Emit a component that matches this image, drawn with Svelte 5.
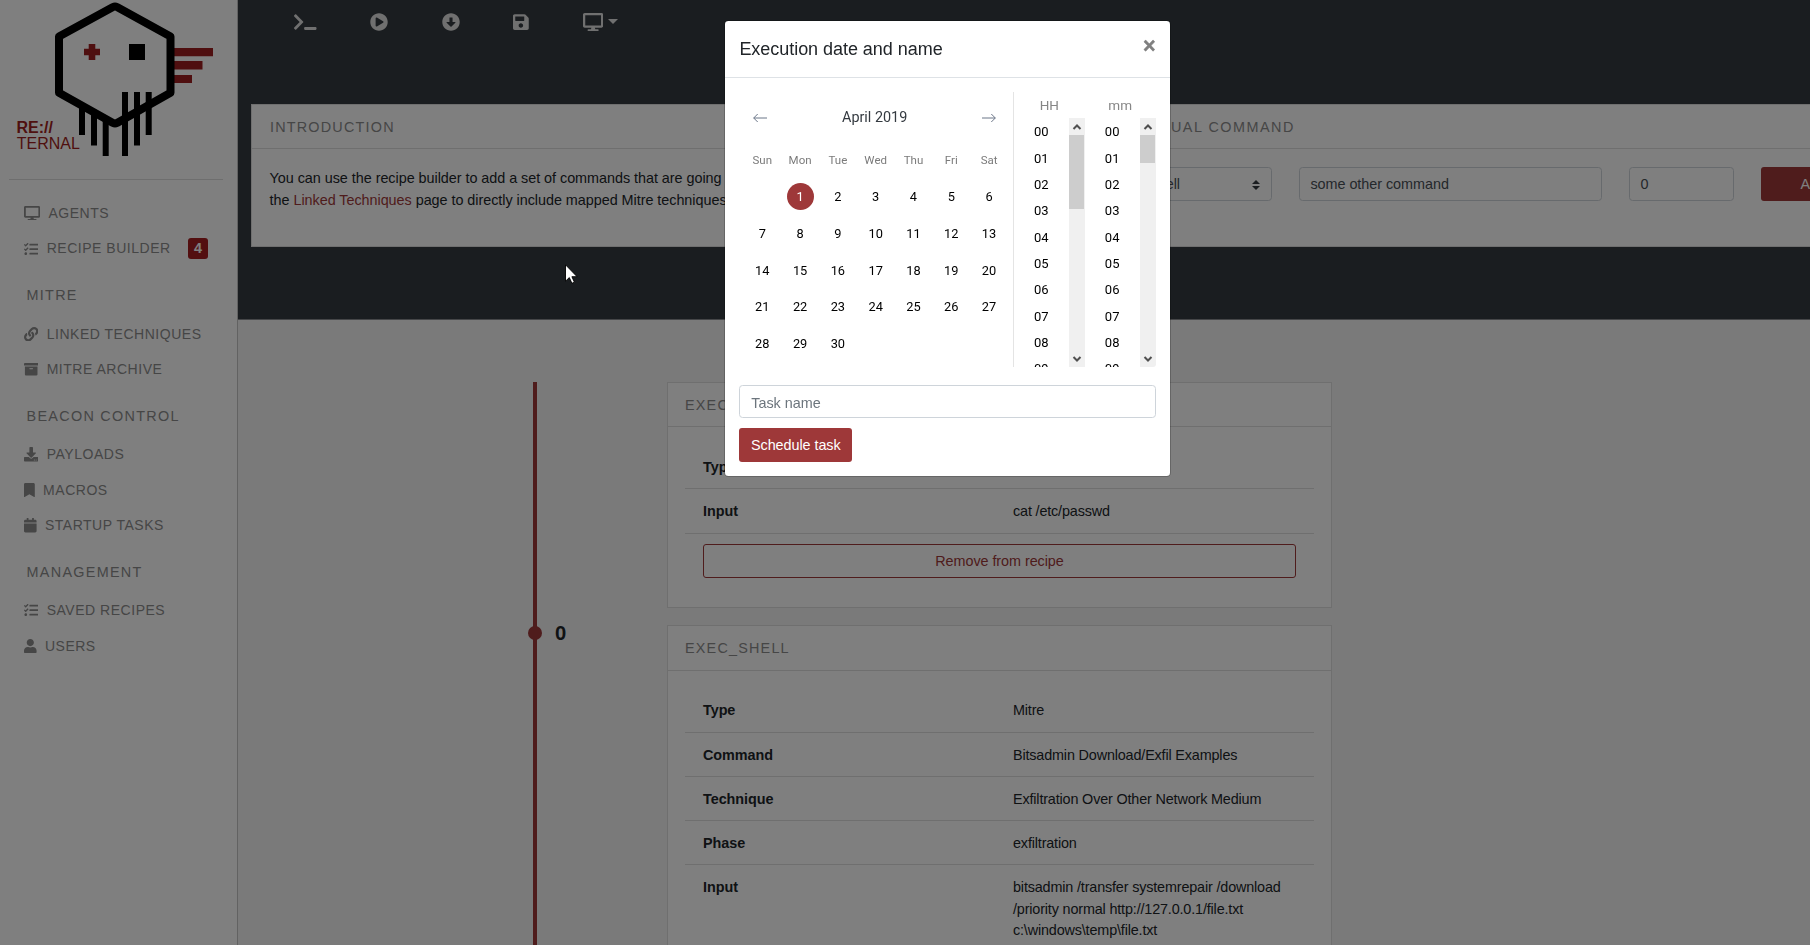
<script>
  const icons = {
    terminal: [640, 'M257.981 272.971L63.638 467.314c-9.373 9.373-24.569 9.373-33.941 0L7.029 444.647c-9.357-9.357-9.375-24.522-.04-33.901L161.011 256 6.99 101.255c-9.335-9.379-9.317-24.544.04-33.901l22.667-22.667c9.373-9.373 24.569-9.373 33.941 0L257.981 239.03c9.373 9.372 9.373 24.568 0 33.941zM640 456v-32c0-13.255-10.745-24-24-24H312c-13.255 0-24 10.745-24 24v32c0 13.255 10.745 24 24 24h304c13.255 0 24-10.745 24-24z'],
    play: [512, 'M256 8C119 8 8 119 8 256s111 248 248 248 248-111 248-248S393 8 256 8zm115.7 272l-176 101c-15.8 8.8-35.7-2.5-35.7-21V152c0-18.4 19.8-29.8 35.7-21l176 107c16.4 9.2 16.4 32.9 0 42z'],
    down: [512, 'M504 256c0 137-111 248-248 248S8 393 8 256 119 8 256 8s248 111 248 248zM212 140v116h-70.9c-10.7 0-16.1 13-8.5 20.5l114.9 114.3c4.7 4.7 12.2 4.7 16.9 0l114.9-114.3c7.6-7.6 2.2-20.5-8.5-20.5H300V140c0-6.6-5.4-12-12-12h-64c-6.6 0-12 5.4-12 12z'],
    save: [448, 'M433.941 129.941l-83.882-83.882A48 48 0 0 0 316.118 32H48C21.49 32 0 53.49 0 80v352c0 26.51 21.49 48 48 48h352c26.51 0 48-21.49 48-48V163.882a48 48 0 0 0-14.059-33.941zM224 416c-35.346 0-64-28.654-64-64 0-35.346 28.654-64 64-64s64 28.654 64 64c0 35.346-28.654 64-64 64zm96-304.52V212c0 6.627-5.373 12-12 12H76c-6.627 0-12-5.373-12-12V108c0-6.627 5.373-12 12-12h228.52c3.183 0 6.235 1.264 8.485 3.515l3.48 3.48A11.996 11.996 0 0 1 320 111.48z'],
    desktop: [576, 'M528 0H48C21.5 0 0 21.5 0 48v320c0 26.5 21.5 48 48 48h192l-16 48h-72c-13.3 0-24 10.7-24 24s10.7 24 24 24h272c13.3 0 24-10.7 24-24s-10.7-24-24-24h-72l-16-48h192c26.5 0 48-21.5 48-48V48c0-26.5-21.5-48-48-48zm-16 352H64V64h448v288z'],
    tasks: [512, 'M139.61 35.5a12 12 0 0 0-17 0L58.93 98.81l-22.7-22.12a12 12 0 0 0-17 0L3.53 92.41a12 12 0 0 0 0 17l47.59 47.4a12.78 12.78 0 0 0 17.61 0l15.59-15.62L156.52 69a12.09 12.09 0 0 0 .09-17zm0 159.19a12 12 0 0 0-17 0l-63.68 63.72-22.7-22.1a12 12 0 0 0-17 0L3.53 252a12 12 0 0 0 0 17L51 316.5a12.77 12.77 0 0 0 17.6 0l15.7-15.69 72.2-72.22a12 12 0 0 0 .09-16.9zM64 368c-26.49 0-48.59 21.5-48.59 48S37.53 464 64 464a48 48 0 0 0 0-96zm432 16H208a16 16 0 0 0-16 16v32a16 16 0 0 0 16 16h288a16 16 0 0 0 16-16v-32a16 16 0 0 0-16-16zm0-320H208a16 16 0 0 0-16 16v32a16 16 0 0 0 16 16h288a16 16 0 0 0 16-16V80a16 16 0 0 0-16-16zm0 160H208a16 16 0 0 0-16 16v32a16 16 0 0 0 16 16h288a16 16 0 0 0 16-16v-32a16 16 0 0 0-16-16z'],
    link: [512, 'M326.612 185.391c59.747 59.809 58.927 155.698.36 214.59-.11.12-.24.25-.36.37l-67.2 67.2c-59.27 59.27-155.699 59.262-214.96 0-59.27-59.26-59.27-155.7 0-214.96l37.106-37.106c9.84-9.84 26.786-3.3 27.294 10.606.648 17.722 3.826 35.527 9.69 52.721 1.986 5.822.567 12.262-3.783 16.612l-13.087 13.087c-28.026 28.026-28.905 73.66-1.155 101.96 28.024 28.579 74.086 28.749 102.325.51l67.2-67.19c28.191-28.191 28.073-73.757 0-101.83-3.701-3.694-7.429-6.564-10.341-8.569a16.037 16.037 0 0 1-6.947-12.606c-.396-10.567 3.348-21.456 11.698-29.806l21.054-21.055c5.521-5.521 14.182-6.199 20.584-1.731a152.482 152.482 0 0 1 20.522 17.197zM467.547 44.449c-59.261-59.262-155.69-59.27-214.96 0l-67.2 67.2c-.12.12-.25.25-.36.37-58.566 58.892-59.387 154.781.36 214.59a152.454 152.454 0 0 0 20.521 17.196c6.402 4.468 15.064 3.789 20.584-1.731l21.054-21.055c8.35-8.35 12.094-19.239 11.698-29.806a16.037 16.037 0 0 0-6.947-12.606c-2.912-2.005-6.64-4.875-10.341-8.569-28.073-28.073-28.191-73.639 0-101.83l67.2-67.19c28.239-28.239 74.3-28.069 102.325.51 27.75 28.3 26.872 73.934-1.155 101.96l-13.087 13.087c-4.35 4.35-5.769 10.79-3.783 16.612 5.864 17.194 9.042 34.999 9.69 52.721.509 13.906 17.454 20.446 27.294 10.606l37.106-37.106c59.271-59.259 59.271-155.699.001-214.959z'],
    archive: [512, 'M32 448c0 17.7 14.3 32 32 32h384c17.7 0 32-14.3 32-32V160H32v288zm160-212c0-6.6 5.4-12 12-12h104c6.6 0 12 5.4 12 12v8c0 6.6-5.4 12-12 12H204c-6.6 0-12-5.4-12-12v-8zM480 32H32C14.3 32 0 46.3 0 64v48c0 8.8 7.2 16 16 16h480c8.8 0 16-7.2 16-16V64c0-17.7-14.3-32-32-32z'],
    download: [512, 'M216 0h80c13.3 0 24 10.7 24 24v168h87.7c17.8 0 26.7 21.5 14.1 34.1L269.7 378.3c-7.5 7.5-19.8 7.5-27.3 0L90.1 226.1c-12.6-12.6-3.7-34.1 14.1-34.1H192V24c0-13.3 10.7-24 24-24zm296 376v112c0 13.3-10.7 24-24 24H24c-13.3 0-24-10.7-24-24V376c0-13.3 10.7-24 24-24h146.7l49 49c20.1 20.1 52.5 20.1 72.6 0l49-49H488c13.3 0 24 10.7 24 24zm-124 88c0-11-9-20-20-20s-20 9-20 20 9 20 20 20 20-9 20-20zm64 0c0-11-9-20-20-20s-20 9-20 20 9 20 20 20 20-9 20-20z'],
    bookmark: [384, 'M0 512V48C0 21.49 21.49 0 48 0h288c26.51 0 48 21.49 48 48v464L192 400 0 512z'],
    calendar: [448, 'M12 192h424c6.6 0 12 5.4 12 12v260c0 26.5-21.5 48-48 48H48c-26.5 0-48-21.5-48-48V204c0-6.6 5.4-12 12-12zm436-44v-36c0-26.5-21.5-48-48-48h-48V12c0-6.6-5.4-12-12-12h-40c-6.6 0-12 5.4-12 12v52H160V12c0-6.6-5.4-12-12-12h-40c-6.6 0-12 5.4-12 12v52H48C21.5 64 0 85.5 0 112v36c0 6.6 5.4 12 12 12h424c6.6 0 12-5.4 12-12z'],
    user: [448, 'M224 256c70.7 0 128-57.3 128-128S294.7 0 224 0 96 57.3 96 128s57.3 128 128 128zm89.6 32h-16.7c-22.2 10.2-46.9 16-72.9 16s-50.6-5.8-72.9-16h-16.7C60.2 288 0 348.2 0 422.4V464c0 26.5 21.5 48 48 48h352c26.5 0 48-21.5 48-48v-41.6c0-74.2-60.2-134.4-134.4-134.4z'],
  };

  const nav = [
    { items: [['desktop', 'Agents'], ['tasks', 'Recipe builder', 4]] },
    { title: 'Mitre', items: [['link', 'Linked techniques'], ['archive', 'Mitre archive']] },
    { title: 'Beacon control', items: [['download', 'Payloads'], ['bookmark', 'Macros'], ['calendar', 'Startup tasks']] },
    { title: 'Management', items: [['tasks', 'Saved recipes'], ['user', 'Users']] },
  ];

  const tools = ['terminal', 'play', 'down', 'save', 'desktop'];

  const recipe = [
    { rows: [['Type', 'Manual'], ['Input', 'cat /etc/passwd']], removable: true },
    {
      rows: [
        ['Type', 'Mitre'],
        ['Command', 'Bitsadmin Download/Exfil Examples'],
        ['Technique', 'Exfiltration Over Other Network Medium'],
        ['Phase', 'exfiltration'],
        ['Input', 'bitsadmin /transfer systemrepair /download\n/priority normal http://127.0.0.1/file.txt\nc:\\windows\\temp\\file.txt'],
      ],
    },
  ];

  const weekdays = ['Sun', 'Mon', 'Tue', 'Wed', 'Thu', 'Fri', 'Sat'];
  const days = [null, ...Array.from({ length: 30 }, (_, i) => i + 1)];
  const numbers = Array.from({ length: 10 }, (_, i) => String(i).padStart(2, '0'));
  const clocks = [
    { unit: 'HH', thumb: 74 },
    { unit: 'mm', thumb: 28 },
  ];

  let selected = $state(1);
</script>

{#snippet icon(name, size)}
  <svg class="icon" viewBox="0 0 {icons[name][0]} 512" width={(icons[name][0] / 512) * size} height={size}>
    <path fill="currentColor" d={icons[name][1]} />
  </svg>
{/snippet}

<div class="app">
  <aside>
    <svg class="logo" viewBox="0 0 237 160" width="237" height="160">
      <g fill="#9f1f21">
        <path d="M88.7 44h6.6v4.7h4.7v6.6h-4.7v4.7h-6.6v-4.7h-4.7v-6.6h4.7z" />
        <path d="M174 48h39v8.3h-39zM174 61h28.5v8.5H174zM174 75h18v8h-18z" />
        <text class="mark bold" x="16.5" y="133">RE://</text>
        <text class="mark" x="16.8" y="149.300">TERNAL</text>
      </g>
      <path d="M129 44h16v16h-16zM79 107h6v28h-6zM91 113h6v32.5h-6zM102.7 119h6v37h-6zM122 92h6v64h-6zM134 92h6v53.5h-6zM145.7 92h6v43h-6z" />
      <path d="M113 7q2-1 4 0l53.5 29.6v56.2L117 122.900q-2 1-4 0L59 92.800V36.600z" fill="none" stroke="#000" stroke-width="8" stroke-linejoin="round" />
    </svg>
    <hr />
    {#each nav as group}
      {#if group.title}<h6>{group.title}</h6>{/if}
      <ul>
        {#each group.items as [glyph, label, count]}
          <li>
            {@render icon(glyph, 14.4)}
            <span>{label}</span>
            {#if count}<b class="badge">{count}</b>{/if}
          </li>
        {/each}
      </ul>
    {/each}
  </aside>

  <main>
    <section class="banner">
      <nav>
        {#each tools as tool}
          <button class="tool" class:dropdown={tool === 'desktop'} aria-label={tool}>{@render icon(tool, 18)}</button>
        {/each}
      </nav>
      <div class="panels">
        <article class="card">
          <header>Introduction</header>
          <div class="body">
            You can use the recipe builder to add a set of commands that are going to<br />
            the <a href="#techniques">Linked Techniques</a> page to directly include mapped Mitre techniques
          </div>
        </article>
        <article class="card manual">
          <header>Manual command</header>
          <div class="body form">
            <div class="control select">
              exec_shell
              <svg viewBox="0 0 4 5" width="8" height="10"><path fill="#343a40" d="M2 0L0 2h4zm0 5L0 3h4z" /></svg>
            </div>
            <div class="control">some other command</div>
            <div class="control">0</div>
            <button class="btn">Add</button>
          </div>
        </article>
      </div>
    </section>

    <section class="recipe">
      <div class="timeline"><div class="stop"><i></i><b>0</b></div></div>
      <div class="steps">
        {#each recipe as step}
          <article class="card">
            <header>exec_shell</header>
            <div class="body">
              {#each step.rows as [name, value]}
                <div class="row"><b>{name}</b><span>{value}</span></div>
              {/each}
              {#if step.removable}
                <div class="remove"><button class="btn outline">Remove from recipe</button></div>
              {/if}
            </div>
          </article>
        {/each}
      </div>
    </section>
  </main>
</div>

<div class="backdrop">
  <div class="modal" role="dialog">
    <header><h5>Execution date and name</h5><button class="close">×</button></header>
    <div class="content">
      <div class="picker">
        <div class="calendar">
          <div class="month">
            <svg viewBox="0 0 14 10" width="14" height="10"><path d="M14 5H.7M4.700 1L.7 5l4 4" /></svg>
            <span>April 2019</span>
            <svg viewBox="0 0 14 10" width="14" height="10"><path d="M0 5h13.300M9.300 1l4 4-4 4" /></svg>
          </div>
          <div class="week">
            {#each weekdays as day}<span>{day}</span>{/each}
          </div>
          <div class="days">
            {#each days as day}
              {#if day}
                <button class:selected={day === selected} onclick={() => (selected = day)}>{day}</button>
              {:else}<span></span>{/if}
            {/each}
          </div>
        </div>
        {#each clocks as clock}
          <div class="clock">
            <div class="unit">{clock.unit}</div>
            <div class="scroller">
              <div class="numbers">
                {#each numbers as n}<div>{n}</div>{/each}
              </div>
              <div class="bar">
                <svg viewBox="0 0 16 17" width="16" height="17"><path d="M4.500 11L8 7.500l3.500 3.500" /></svg>
                <div class="thumb" style="height: {clock.thumb}px"></div>
                <svg class="end" viewBox="0 0 16 17" width="16" height="17"><path d="M4.500 7L8 10.500 11.500 7" /></svg>
              </div>
            </div>
          </div>
        {/each}
      </div>
      <input placeholder="Task name" />
      <button class="btn">Schedule task</button>
    </div>
  </div>
</div>

<svg class="cursor" viewBox="0 0 13 20" width="13" height="20">
  <path d="M.5.8v16.400l3.800-3.600 2.600 5.700 2.500-1.100-2.500-5.500h5.200z" fill="#fff" stroke="#000" stroke-width=".9" />
</svg>

<style>
  :global(body) {
    overflow: hidden;
  }
  * {
    box-sizing: border-box;
  }
  .app, .modal {
    font: 14.4px/21.6px 'Liberation Sans', Arial, sans-serif;
    color: #212529;
  }
  .app {
    display: flex;
    height: 945px;
    overflow: hidden;
    background: #f4f4f4;
  }
  button {
    font: inherit;
    color: inherit;
    border: 0;
    padding: 0;
    background: none;
  }
  .icon {
    display: block;
    flex: none;
  }

  aside {
    flex: none;
    width: 238px;
    background: #fff;
    border-right: 1px solid #c4c4c4;
  }
  .logo {
    display: block;
  }
  .mark {
    font: 16px 'Liberation Sans', Arial, sans-serif;
  }
  .bold {
    font-weight: bold;
  }
  hr {
    margin: 19px 14px 15.5px 9px;
    border: 0;
    border-top: 1px solid #dcdcdc;
  }
  ul {
    list-style: none;
    margin: 0;
    padding: 0 0 0 24px;
    color: #8c8c8c;
  }
  li {
    display: flex;
    align-items: center;
    gap: 8.3px;
    height: 35.5px;
    font-size: 14px;
    letter-spacing: 0.52px;
    text-transform: uppercase;
  }
  li span {
    padding-top: 1px;
  }
  .badge {
    margin-left: 9px;
    width: 20px;
    height: 21px;
    border-radius: 3px;
    background: #a61e21;
    color: #fff;
    font-size: 14.4px;
    line-height: 21px;
    text-align: center;
    letter-spacing: 0;
  }
  h6 {
    margin: 18.8px 0 9.2px 26.500px;
    font-size: 14.4px;
    line-height: 21.6px;
    font-weight: normal;
    letter-spacing: 1.3px;
    text-transform: uppercase;
    color: #8c8c8c;
  }

  main {
    flex: 1;
    min-width: 0;
  }
  .banner {
    height: 320px;
    background: #343a40;
    border-bottom: 1px solid #8a8d90;
    overflow: hidden;
  }
  nav {
    display: flex;
    gap: 53.600px;
    height: 104px;
    padding: 13px 0 0 56px;
    color: #e0e0e0;
  }
  .tool {
    height: 18px;
  }
  .dropdown {
    display: flex;
    gap: 5px;
    align-items: center;
  }
  .dropdown::after {
    content: '';
    margin-bottom: 2px;
    border: 5px solid transparent;
    border-top-color: currentColor;
    border-bottom: 0;
  }
  .panels {
    display: grid;
    grid-template-columns: 805px 805px;
    gap: 26px;
    padding-left: 13px;
  }
  .card {
    background: #fff;
    border: 1px solid #dfdfdf;
  }
  .card header {
    padding: 11.8px 17px 9.8px;
    border-bottom: 1px solid #dfdfdf;
    color: #8c8c8c;
    letter-spacing: 1.2px;
    text-transform: uppercase;
  }
  .card .body {
    padding: 18px 17px;
  }
  .panels .card header {
    padding-left: 18px;
  }
  .panels .body {
    height: 96.500px;
    padding: 19px 17.600px;
    letter-spacing: -0.04px;
    white-space: nowrap;
  }
  .panels .manual header {
    padding-left: 51.500px;
    letter-spacing: 1.5px;
  }
  a {
    color: #9e3839;
    text-decoration: none;
  }
  .panels .form {
    display: grid;
    grid-template-columns: 171px 303px 105px 105px;
    gap: 27px;
    align-items: start;
    padding-top: 18px;
  }
  .control, input {
    display: flex;
    height: 33.6px;
    padding: 6px 10.8px 4px;
    border: 1px solid #ced4da;
    border-radius: 3.6px;
    background: #fff;
    color: #495057;
  }
  .select {
    justify-content: space-between;
    align-items: center;
  }
  .btn {
    height: 33.6px;
    padding: 2px 11.600px 0;
    border-radius: 3px;
    background: #9e3839;
    color: #fff;
    letter-spacing: -0.06px;
  }
  .outline {
    width: 100%;
    background: none;
    border: 1px solid #9e3839;
    color: #9e3839;
  }

  .recipe {
    display: flex;
    padding-top: 62px;
  }
  .timeline {
    width: 4px;
    height: 600px;
    margin-left: 295px;
    background: #9e3839;
  }
  .stop {
    display: flex;
    align-items: center;
    gap: 13px;
    width: 60px;
    margin: 240px 0 0 -5px;
    font-size: 20.2px;
  }
  .stop b {
    padding-top: 1px;
  }
  .stop i {
    width: 14px;
    height: 14px;
    border-radius: 50%;
    background: #9e3839;
  }
  .steps {
    display: flex;
    flex-direction: column;
    gap: 17.600px;
    width: 665px;
    margin-left: 130px;
  }
  .row {
    display: grid;
    grid-template-columns: 310px 1fr;
    padding: 11.8px 0 9.8px 18px;
    border-bottom: 1px solid #dfdfdf;
    letter-spacing: -0.05px;
  }
  .row span {
    white-space: pre;
    letter-spacing: -0.16px;
  }
  .remove {
    padding: 10.8px 18px;
  }
  .remove .btn {
    display: block;
  }

  .backdrop {
    position: fixed;
    inset: 0;
    background: rgba(0, 0, 0, 0.5);
  }
  .modal {
    width: 447px;
    margin: 20px 0 0 724px;
    background: #fff;
    background-clip: padding-box;
    border: 1px solid rgba(0, 0, 0, 0.2);
    border-radius: 4.300px;
  }
  .modal header {
    display: flex;
    justify-content: space-between;
    height: 56.800px;
    padding: 14.4px;
    border-bottom: 1px solid #dee2e6;
  }
  h5 {
    margin: 0;
    padding-top: 1px;
    font-size: 18px;
    line-height: 27px;
    font-weight: normal;
    letter-spacing: -0.04px;
  }
  .close {
    height: 22px;
    font: bold 21.6px/22px 'Liberation Sans', Arial, sans-serif;
    color: #7f7f7f;
    -webkit-text-stroke: 0.4px #7f7f7f;
  }
  .content {
    padding: 14.4px;
  }
  .picker {
    display: flex;
    height: 274.700px;
    margin-bottom: 18px;
    font-family: Roboto, sans-serif;
  }
  .calendar {
    width: 275px;
    border-right: 1px solid #e4e4e4;
    padding: 15px 4px 0 4px;
  }
  .month {
    display: flex;
    align-items: center;
    justify-content: space-between;
    padding: 0 13px 0 10px;
    margin-bottom: 21px;
    color: #343a40;
    font-size: 14.4px;
  }
  .month svg {
    fill: none;
    stroke: #6b7688;
    stroke-width: 1;
  }
  .week, .days {
    display: grid;
    grid-template-columns: repeat(7, 37.800px);
    justify-items: center;
  }
  .week {
    font-size: 11.5px;
    color: #7b7b7b;
    margin-bottom: 7px;
  }
  .days {
    grid-auto-rows: 36.700px;
    align-items: center;
    font-size: 12.8px;
    color: #000;
  }
  .days button {
    width: 27px;
    height: 27px;
    padding-top: 1px;
    border-radius: 50%;
  }
  .days .selected {
    background: #9e3839;
    color: #fff;
  }
  .clock {
    display: flex;
    flex-direction: column;
    width: 71px;
  }
  .unit {
    height: 26px;
    padding-top: 3px;
    text-align: center;
    font-size: 13.500px;
    color: #868686;
  }
  .scroller {
    display: flex;
    flex: 1;
    min-height: 0;
    overflow: hidden;
  }
  .numbers {
    flex: 1;
    padding-top: 1px;
    text-align: center;
    font-size: 13px;
    line-height: 26.35px;
    color: #000;
  }
  .bar {
    display: flex;
    flex-direction: column;
    width: 16px;
    background: #f0f0f0;
  }
  .clock:last-child .bar {
    border-bottom-right-radius: 3px;
  }
  .bar svg {
    display: block;
    fill: none;
    stroke: #505050;
    stroke-width: 2;
  }
  .bar .end {
    margin-top: auto;
  }
  .thumb {
    width: 15px;
    background: #cdcdcd;
  }
  input {
    width: 100%;
    font: inherit;
    margin-bottom: 9.600px;
  }
  input::placeholder {
    color: #6c757d;
    opacity: 1;
  }
  .cursor {
    position: fixed;
    left: 565px;
    top: 264px;
  }
</style>
